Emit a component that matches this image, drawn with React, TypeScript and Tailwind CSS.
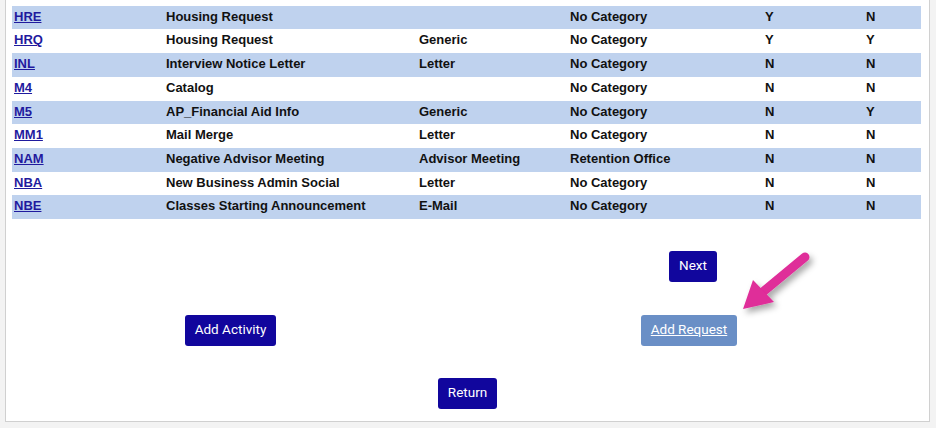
import React from "react";

type Row = [string, string, string, string, string, string];

const rows: Row[] = [
  ["HRE", "Housing Request", "", "No Category", "Y", "N"],
  ["HRQ", "Housing Request", "Generic", "No Category", "Y", "Y"],
  ["INL", "Interview Notice Letter", "Letter", "No Category", "N", "N"],
  ["M4", "Catalog", "", "No Category", "N", "N"],
  ["M5", "AP_Financial Aid Info", "Generic", "No Category", "N", "Y"],
  ["MM1", "Mail Merge", "Letter", "No Category", "N", "N"],
  ["NAM", "Negative Advisor Meeting", "Advisor Meeting", "Retention Office", "N", "N"],
  ["NBA", "New Business Admin Social", "Letter", "No Category", "N", "N"],
  ["NBE", "Classes Starting Announcement", "E-Mail", "No Category", "N", "N"],
];

const heights = [23, 24, 24, 24, 23, 24, 24, 23, 24];

function Cells({ r }: { r: Row }) {
  return (
    <>
      <div className="w-[152px] pl-[2px]">
        <a href="#" className="text-[#1f1a9e] underline">
          {r[0]}
        </a>
      </div>
      <div className="w-[253px] pl-[2px]">{r[1]}</div>
      <div className="w-[151px] pl-[2px]">{r[2]}</div>
      <div className="w-[195px] pl-[2px]">{r[3]}</div>
      <div className="w-[101px] pl-[2px]">{r[4]}</div>
      <div className="w-[57px] pl-[2px]">{r[5]}</div>
    </>
  );
}

export default function App() {
  return (
    <div className="relative h-[428px] w-[936px] overflow-hidden bg-[#f3f3f3] pl-[5px]">
      <div className="mt-[-25px] w-[925px] border border-[#d0d0d0] bg-white pl-[6px] pr-[8px] pt-[6px] pb-[12px]">
        <div className="w-[909px] font-['Liberation_Sans',Arial,sans-serif] text-[13px] font-bold text-[#111]">
          <div className="flex h-[24px] items-center pb-[2px]">
            <Cells r={["", "", "", "No Category", "", ""]} />
          </div>
          {rows.map((r, i) => (
            <div
              key={r[0]}
              className={`flex items-center pb-[2px] ${i % 2 === 0 ? "bg-[#bfd2ee]" : "bg-white"}`}
              style={{ height: heights[i] }}
            >
              <Cells r={r} />
            </div>
          ))}
        </div>

        <div className="font-['Roboto',Arial,sans-serif] text-[13.5px] text-white">
          <div className="mt-[32px] flex h-[31px] pl-[657px]">
            <button className="h-[31px] w-[48px] rounded-[3px] bg-[#11069d] pb-[2px]">Next</button>
          </div>
          <div className="mt-[33px] flex h-[31px] pl-[173px]">
            <button className="h-[31px] w-[91px] rounded-[3px] bg-[#11069d] pb-[2px]">Add Activity</button>
            <button className="ml-[365px] h-[31px] w-[96px] rounded-[3px] bg-[#6a8fc6] pb-[2px] underline">
              Add Request
            </button>
          </div>
          <div className="mt-[32px] flex h-[31px] pl-[426px]">
            <button className="h-[31px] w-[59px] rounded-[3px] bg-[#11069d] pb-[2px]">Return</button>
          </div>
        </div>
      </div>

      <svg className="absolute left-0 top-0" width="936" height="428" viewBox="0 0 936 428">
        <defs>
          <filter id="sh" x="-50%" y="-50%" width="200%" height="200%">
            <feDropShadow dx="3" dy="4" stdDeviation="3" floodColor="#000" floodOpacity="0.35" />
          </filter>
        </defs>
        <g filter="url(#sh)">
          <line x1="805" y1="257" x2="764" y2="291" stroke="#df2d99" strokeWidth="9" strokeLinecap="round" />
          <polygon points="743,309 753,280 774,302" fill="#df2d99" />
        </g>
      </svg>
    </div>
  );
}
